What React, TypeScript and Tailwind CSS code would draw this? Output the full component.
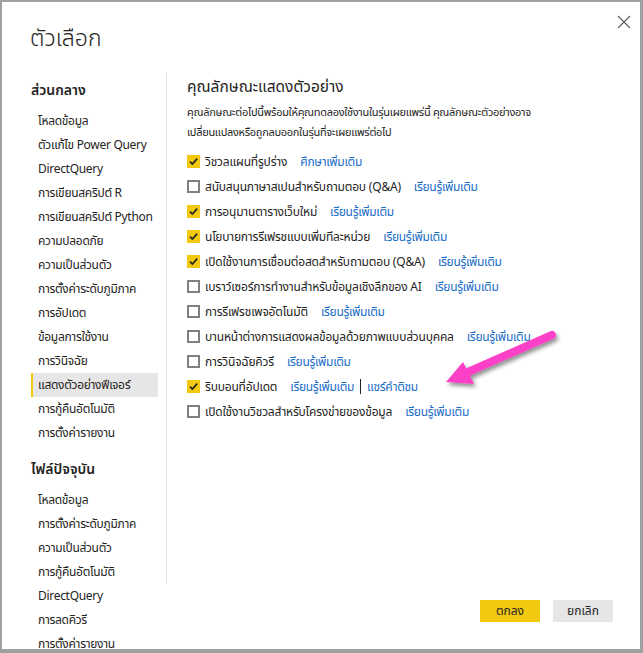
import React from "react";

const FONT = '"Noto Sans Thai", "Leelawadee UI", "Noto Sans", Tahoma, sans-serif';

const general = [
  "โหลดข้อมูล",
  "ตัวแก้ไข Power Query",
  "DirectQuery",
  "การเขียนสคริปต์ R",
  "การเขียนสคริปต์ Python",
  "ความปลอดภัย",
  "ความเป็นส่วนตัว",
  "การตั้งค่าระดับภูมิภาค",
  "การอัปเดต",
  "ข้อมูลการใช้งาน",
  "การวินิจฉัย",
  "แสดงตัวอย่างฟีเจอร์",
  "การกู้คืนอัตโนมัติ",
  "การตั้งค่ารายงาน",
];

const currentFile = [
  "โหลดข้อมูล",
  "การตั้งค่าระดับภูมิภาค",
  "ความเป็นส่วนตัว",
  "การกู้คืนอัตโนมัติ",
  "DirectQuery",
  "การลดคิวรี",
  "การตั้งค่ารายงาน",
];

type Feature = { label: string; checked: boolean; link: string; extra?: string };

const features: Feature[] = [
  { label: "วิชวลแผนที่รูปร่าง", checked: true, link: "ศึกษาเพิ่มเติม" },
  { label: "สนับสนุนภาษาสเปนสำหรับถามตอบ (Q&A)", checked: false, link: "เรียนรู้เพิ่มเติม" },
  { label: "การอนุมานตารางเว็บใหม่", checked: true, link: "เรียนรู้เพิ่มเติม" },
  { label: "นโยบายการรีเฟรชแบบเพิ่มทีละหน่วย", checked: true, link: "เรียนรู้เพิ่มเติม" },
  { label: "เปิดใช้งานการเชื่อมต่อสดสำหรับถามตอบ (Q&A)", checked: true, link: "เรียนรู้เพิ่มเติม" },
  { label: "เบราว์เซอร์การทำงานสำหรับข้อมูลเชิงลึกของ AI", checked: false, link: "เรียนรู้เพิ่มเติม" },
  { label: "การรีเฟรชเพจอัตโนมัติ", checked: false, link: "เรียนรู้เพิ่มเติม" },
  { label: "บานหน้าต่างการแสดงผลข้อมูลด้วยภาพแบบส่วนบุคคล", checked: false, link: "เรียนรู้เพิ่มเติม" },
  { label: "การวินิจฉัยคิวรี", checked: false, link: "เรียนรู้เพิ่มเติม" },
  { label: "ริบบอนที่อัปเดต", checked: true, link: "เรียนรู้เพิ่มเติม", extra: "แชร์คำติชม" },
  { label: "เปิดใช้งานวิชวลสำหรับโครงข่ายของข้อมูล", checked: false, link: "เรียนรู้เพิ่มเติม" },
];

function Checkbox({ checked }: { checked: boolean }) {
  if (checked) {
    return (
      <span className="flex h-[13px] w-[13px] shrink-0 items-center justify-center bg-[#f2c811]">
        <svg width="11" height="11" viewBox="0 0 11 11">
          <path d="M2 5.6 L4.4 8 L9.2 2.6" fill="none" stroke="#252423" strokeWidth="1.7" />
        </svg>
      </span>
    );
  }
  return <span className="h-[13px] w-[13px] shrink-0 border-2 border-[#7f7f7f] bg-white" />;
}

export default function App() {
  return (
    <div
      className="relative flex h-[653px] w-[643px] flex-col overflow-hidden border-t-2 border-l-2 border-r-[3px] border-b-4 border-[#a0a0a0] bg-white text-[#252423]"
      style={{ fontFamily: FONT }}
    >
      {/* close */}
      <button className="absolute right-[9px] top-[13px] flex h-[14px] w-[14px] items-center justify-center">
        <svg width="14" height="14" viewBox="0 0 14 14">
          <path d="M1 1 L13 13 M13 1 L1 13" stroke="#605e5c" strokeWidth="1.1" />
        </svg>
      </button>

      {/* title */}
      <div className="h-[70px] shrink-0 pl-[28px] pt-[21px] text-[23px] leading-[32px] font-light text-[#252423]">
        ตัวเลือก
      </div>

      <div className="flex min-h-0 flex-1">
        {/* sidebar */}
        <div className="w-[164px] shrink-0 overflow-hidden pl-[29px] pr-[8px] pt-[7px]">
          <div className="mb-[6px] h-[24px] text-[14px] leading-[24px] font-semibold">ส่วนกลาง</div>
          {general.map((item) => {
            const sel = item === "แสดงตัวอย่างฟีเจอร์";
            return (
              <div
                key={item}
                className={
                  sel
                    ? "h-[24px] whitespace-nowrap border-l-2 border-[#f2c811] bg-[#e6e6e6] pl-[5px] text-[12px] leading-[24px] tracking-[-0.3px]"
                    : "h-[24px] whitespace-nowrap border-l-2 border-transparent pl-[5px] text-[12px] leading-[24px] tracking-[-0.3px]"
                }
              >
                {item}
              </div>
            );
          })}
          <div className="mb-[6px] mt-[13px] h-[24px] text-[14px] leading-[24px] font-semibold">ไฟล์ปัจจุบัน</div>
          {currentFile.map((item, i) => (
            <div
              key={i}
              className="h-[24px] whitespace-nowrap border-l-2 border-transparent pl-[5px] text-[12px] leading-[24px] tracking-[-0.3px]"
            >
              {item}
            </div>
          ))}
        </div>

        {/* main */}
        <div className="flex min-w-0 flex-1 flex-col">
          <div className="h-[512px] shrink-0 border-l border-[#e1dfdd] pl-[20px] pt-[4px]">
            <div className="h-[24px] text-[15.5px] leading-[24px]">คุณลักษณะแสดงตัวอย่าง</div>
            <div className="mt-[3px] text-[11px] leading-[20px] tracking-[-0.3px]">
              <div className="whitespace-nowrap">คุณลักษณะต่อไปนี้พร้อมให้คุณทดลองใช้งานในรุ่นเผยแพร่นี้ คุณลักษณะตัวอย่างอาจ</div>
              <div className="whitespace-nowrap">เปลี่ยนแปลงหรือถูกลบออกในรุ่นที่จะเผยแพร่ต่อไป</div>
            </div>
            <div className="mt-[6px] flex flex-col">
              {features.map((f) => (
                <div key={f.label} className="flex h-[25px] items-center whitespace-nowrap text-[12px]">
                  <Checkbox checked={f.checked} />
                  <span className="ml-[5px] tracking-[-0.2px]">{f.label}</span>
                  <span className="ml-[13px] tracking-[-0.3px] text-[#1a6dc7]">{f.link}</span>
                  {f.extra && (
                    <>
                      <span className="mx-[6px] h-[15px] w-px bg-[#252423]" />
                      <span className="tracking-[-0.3px] text-[#1a6dc7]">{f.extra}</span>
                    </>
                  )}
                </div>
              ))}
            </div>
          </div>
          <div className="flex justify-end gap-[13px] pr-[27px] pt-[16px]">
            <button className="h-[22px] w-[60px] bg-[#f2c811] text-[12px] leading-[22px] text-[#252423]">ตกลง</button>
            <button className="h-[22px] w-[60px] bg-[#e6e6e6] text-[12px] leading-[22px] text-[#252423]">ยกเลิก</button>
          </div>
        </div>
      </div>

      {/* annotation arrow */}
      <svg className="pointer-events-none absolute left-[-2px] top-[-2px]" width="643" height="653" viewBox="0 0 643 653">
        <defs>
          <filter id="sh" x="-20%" y="-20%" width="140%" height="140%">
            <feGaussianBlur in="SourceAlpha" stdDeviation="2" />
            <feOffset dx="2" dy="3" result="b" />
            <feComponentTransfer>
              <feFuncA type="linear" slope="0.45" />
            </feComponentTransfer>
            <feMerge>
              <feMergeNode />
              <feMergeNode in="SourceGraphic" />
            </feMerge>
          </filter>
        </defs>
        <g filter="url(#sh)">
          <path d="M552 335 L468 372" stroke="#fd3fc8" strokeWidth="8" strokeLinecap="round" />
          <path d="M446 382 L463 362 L474 384 Z" fill="#fd3fc8" />
        </g>
      </svg>
    </div>
  );
}
